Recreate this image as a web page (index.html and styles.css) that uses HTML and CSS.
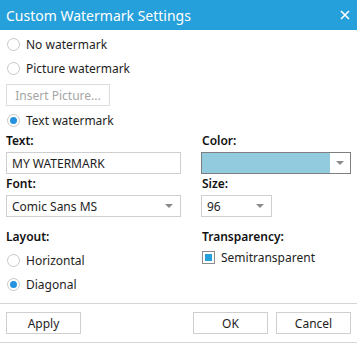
FILE: index.html
```html
<!DOCTYPE html>
<html>
<head>
<meta charset="utf-8">
<link rel="stylesheet" href="styles.css">
</head>
<body>
<div class="dialog">
  <div class="titlebar">
    <span class="title">Custom Watermark Settings</span>
    <svg class="close" width="10" height="10" viewBox="0 0 10 10"><path d="M1 1L9 9M9 1L1 9" stroke="#ffffff" stroke-width="1.6"/></svg>
  </div>
  <div class="content">
    <div class="radio-row r1"><span class="radio"></span><span>No watermark</span></div>
    <div class="radio-row r2"><span class="radio"></span><span>Picture watermark</span></div>
    <div class="btn-row"><button class="btn insert" disabled>Insert Picture...</button></div>
    <div class="radio-row r3"><span class="radio checked"></span><span>Text watermark</span></div>
    <div class="grid">
      <div class="col left">
        <div class="label">Text:</div>
        <div class="field text-field">MY WATERMARK</div>
        <div class="label">Font:</div>
        <div class="field select font-select"><span>Comic Sans MS</span><span class="arrow"></span></div>
        <div class="label section">Layout:</div>
        <div class="radio-row r4"><span class="radio"></span><span>Horizontal</span></div>
        <div class="radio-row r5"><span class="radio checked"></span><span>Diagonal</span></div>
      </div>
      <div class="col right">
        <div class="label">Color:</div>
        <div class="field color-field"><span class="swatch"></span><span class="color-drop"><span class="arrow"></span></span></div>
        <div class="label">Size:</div>
        <div class="field select size-select"><span>96</span><span class="arrow"></span></div>
        <div class="label section">Transparency:</div>
        <div class="check-row"><span class="checkbox"><span class="check-fill"></span></span><span>Semitransparent</span></div>
      </div>
    </div>
  </div>
  <div class="footer">
    <button class="btn">Apply</button>
    <div class="footer-right">
      <button class="btn">OK</button>
      <button class="btn">Cancel</button>
    </div>
  </div>
</div>
</body>
</html>
```
FILE: styles.css
```css
html, body {
  margin: 0;
  padding: 0;
  background: #ffffff;
}
body {
  width: 357px;
  height: 345px;
  overflow: hidden;
  font-family: "Noto Sans", "Open Sans", sans-serif;
  font-size: 12px;
  color: #1e1e1e;
}
.dialog {
  width: 357px;
  height: 345px;
  display: flex;
  flex-direction: column;
}
.titlebar {
  height: 30px;
  background: #26a0da;
  display: flex;
  align-items: center;
  justify-content: space-between;
  padding: 0 7px 0 6px;
  box-sizing: border-box;
}
.title {
  color: #ffffff;
  font-size: 14px;
}
.close {
  display: block;
}
.content {
  padding: 0 6px;
  display: flex;
  flex-direction: column;
}
.radio-row {
  display: flex;
  align-items: center;
  gap: 6px;
  height: 24px;
}
.radio-row.r1 { margin-top: 2px; }
.radio {
  width: 11px;
  height: 11px;
  border: 1px solid #c8c8c8;
  border-radius: 50%;
  box-sizing: content-box;
  margin-left: 1px;
  position: relative;
  background: #fff;
}
.radio.checked::after {
  content: "";
  position: absolute;
  left: 2px;
  top: 2px;
  width: 7px;
  height: 7px;
  border-radius: 50%;
  background: #2592e0;
}
.btn-row {
  height: 22px;
  margin: 4px 0 2px;
}
.btn {
  font-family: inherit;
  font-size: 12px;
  color: #1e1e1e;
  background: #ffffff;
  border: 1px solid #cfcfcf;
  width: 75px;
  height: 22px;
  padding: 0;
  box-sizing: border-box;
}
.btn.insert {
  width: 104px;
  color: #a6a6a6;
  border-color: #dcdcdc;
}
.grid {
  display: grid;
  grid-template-columns: 175px 150px;
  column-gap: 20px;
}
.col {
  display: flex;
  flex-direction: column;
}
.label {
  font-weight: 600;
  height: 20px;
  line-height: 18px;
  color: #111;
}
.label.section {
  margin-top: 10px;
}
.field {
  height: 22px;
  box-sizing: border-box;
  border: 1px solid #cfcfcf;
  display: flex;
  align-items: center;
  padding-left: 5px;
  margin-bottom: 1px;
}
.select {
  justify-content: space-between;
  padding-right: 7px;
}
.arrow {
  width: 0;
  height: 0;
  border-left: 4px solid transparent;
  border-right: 4px solid transparent;
  border-top: 4px solid #8a8a8a;
}
.size-select {
  width: 71px;
}
.right .label, .right .check-row {
  margin-left: 1px;
}
.color-field {
  padding: 0;
  border-color: #7f7f7f;
}
.swatch {
  flex: 0 0 128px;
  height: 20px;
  background: #92cbdd;
}
.color-drop {
  flex: 1;
  display: flex;
  align-items: center;
  justify-content: center;
  height: 20px;
}
.check-row {
  display: flex;
  align-items: center;
  gap: 6px;
  height: 18px;
}
.checkbox {
  width: 11px;
  height: 11px;
  border: 1px solid #8c8c8c;
  display: flex;
  align-items: center;
  justify-content: center;
}
.check-fill {
  width: 7px;
  height: 7px;
  background: #26a0da;
}
.footer {
  margin-top: auto;
  border-top: 1px solid #d5d5d5;
  border-bottom: 1px solid #d5d5d5;
  padding: 8px 6px 8px;
  margin-bottom: 2px;
  display: flex;
  justify-content: space-between;
}
.footer-right {
  display: flex;
  gap: 8px;
}
```
